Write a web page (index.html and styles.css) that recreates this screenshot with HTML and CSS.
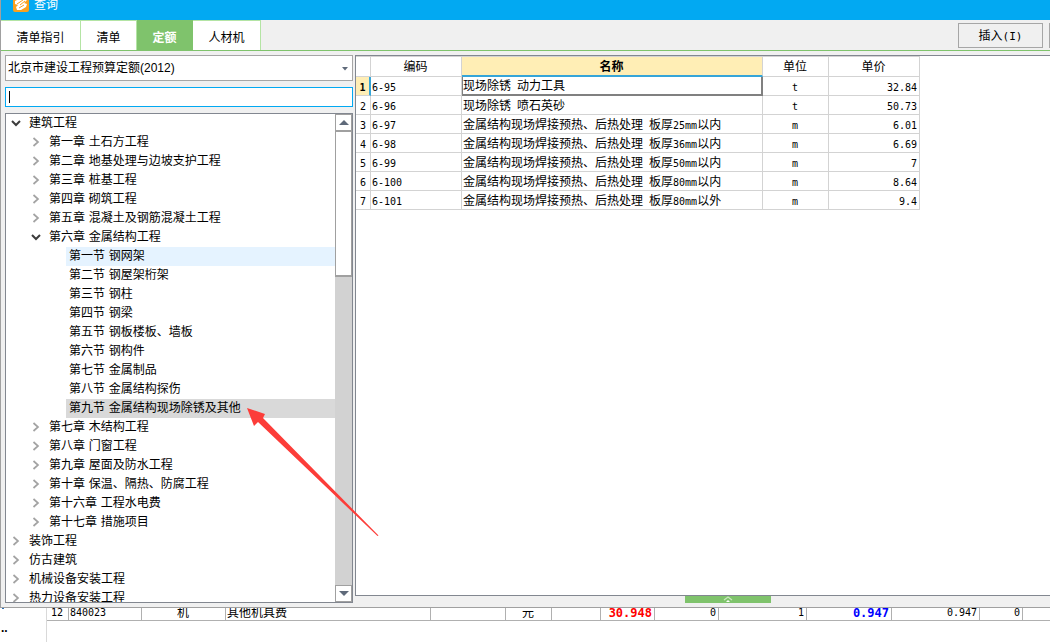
FILE: index.html
```html
<!DOCTYPE html>
<html lang="zh-CN">
<head>
<meta charset="utf-8">
<title>查询</title>
<link rel="stylesheet" href="styles.css">
</head>
<body>
<svg width="0" height="0" class="defs" aria-hidden="true">
  <symbol id="right" viewBox="0 0 10 10"><path d="M2.5 1 L7 5 L2.5 9" fill="none" stroke="#a3a3a3" stroke-width="1.7"/></symbol>
  <symbol id="down" viewBox="0 0 10 10"><path d="M1 3 L5 7 L9 3" fill="none" stroke="#3c3c3c" stroke-width="2"/></symbol>
</svg>
<section class="dialog" role="dialog" aria-labelledby="dialog-title">
  <header class="titlebar">
    <svg class="logo" viewBox="0 0 16 16" aria-hidden="true">
      <rect width="16" height="16" rx="2" fill="#f9a11f"/>
      <path d="M2 5 L8 2 L14 1 L14 4 L11 7 L14 8 L13 11 L8 14 L4 14 L3 11 L5 9 L2 8 Z" fill="#fff"/>
      <path d="M4 8 L10 4 M7 9 L12 5 M6 12 L11 9" fill="none" stroke="#f9a11f" stroke-width="1"/>
    </svg>
    <h1 id="dialog-title">查询</h1>
  </header>
  <div class="toolbar">
    <nav class="tabs" role="tablist">
      <button class="tab wide" role="tab">清单指引</button>
      <button class="tab" role="tab">清单</button>
      <button class="tab active" role="tab" aria-selected="true">定额</button>
      <button class="tab medium" role="tab">人材机</button>
    </nav>
    <div class="actions">
      <button class="action">插入<span class="mono key">(I)</span></button>
      <button class="action clipped" aria-label="更多"></button>
    </div>
  </div>
  <div class="content">
    <aside class="sidebar">
      <label class="library">
        <select aria-label="定额库"><option>北京市建设工程预算定额(2012)</option></select>
        <svg viewBox="0 0 6 4" aria-hidden="true"><path d="M0 0H6L3 3.5Z" fill="#5f6a7a"/></svg>
      </label>
      <div class="search"><input type="text" aria-label="搜索"><span class="caret"></span></div>
      <div class="tree">
        <ul class="nodes">
          <li class="l1"><button><svg><use href="#down"/></svg><span>建筑工程</span></button></li>
          <li class="l2"><button><svg><use href="#right"/></svg><span>第一章 土石方工程</span></button></li>
          <li class="l2"><button><svg><use href="#right"/></svg><span>第二章 地基处理与边坡支护工程</span></button></li>
          <li class="l2"><button><svg><use href="#right"/></svg><span>第三章 桩基工程</span></button></li>
          <li class="l2"><button><svg><use href="#right"/></svg><span>第四章 砌筑工程</span></button></li>
          <li class="l2"><button><svg><use href="#right"/></svg><span>第五章 混凝土及钢筋混凝土工程</span></button></li>
          <li class="l2"><button><svg><use href="#down"/></svg><span>第六章 金属结构工程</span></button></li>
          <li class="l3"><button class="hover"><span>第一节 钢网架</span></button></li>
          <li class="l3"><button><span>第二节 钢屋架桁架</span></button></li>
          <li class="l3"><button><span>第三节 钢柱</span></button></li>
          <li class="l3"><button><span>第四节 钢梁</span></button></li>
          <li class="l3"><button><span>第五节 钢板楼板、墙板</span></button></li>
          <li class="l3"><button><span>第六节 钢构件</span></button></li>
          <li class="l3"><button><span>第七节 金属制品</span></button></li>
          <li class="l3"><button><span>第八节 金属结构探伤</span></button></li>
          <li class="l3"><button class="selected"><span>第九节 金属结构现场除锈及其他</span></button></li>
          <li class="l2"><button><svg><use href="#right"/></svg><span>第七章 木结构工程</span></button></li>
          <li class="l2"><button><svg><use href="#right"/></svg><span>第八章 门窗工程</span></button></li>
          <li class="l2"><button><svg><use href="#right"/></svg><span>第九章 屋面及防水工程</span></button></li>
          <li class="l2"><button><svg><use href="#right"/></svg><span>第十章 保温、隔热、防腐工程</span></button></li>
          <li class="l2"><button><svg><use href="#right"/></svg><span>第十六章 工程水电费</span></button></li>
          <li class="l2"><button><svg><use href="#right"/></svg><span>第十七章 措施项目</span></button></li>
          <li class="l1"><button><svg><use href="#right"/></svg><span>装饰工程</span></button></li>
          <li class="l1"><button><svg><use href="#right"/></svg><span>仿古建筑</span></button></li>
          <li class="l1"><button><svg><use href="#right"/></svg><span>机械设备安装工程</span></button></li>
          <li class="l1"><button><svg><use href="#right"/></svg><span>热力设备安装工程</span></button></li>
        </ul>
        <div class="scrollbar">
          <button aria-label="向上滚动"><svg viewBox="0 0 10 5"><path d="M0 5H10L5 0Z" fill="#5f6a7a"/></svg></button>
          <div class="thumb"></div>
          <button class="end" aria-label="向下滚动"><svg viewBox="0 0 10 5"><path d="M0 0H10L5 5Z" fill="#5f6a7a"/></svg></button>
        </div>
      </div>
    </aside>
    <main class="main">
      <div class="results">
        <table class="grid">
          <colgroup><col class="c-no"><col class="c-code"><col class="c-name"><col class="c-unit"><col class="c-price"></colgroup>
          <thead><tr><th></th><th>编码</th><th class="current">名称</th><th>单位</th><th>单价</th></tr></thead>
          <tbody>
            <tr class="active"><th>1</th><td class="mono">6-95</td><td class="cell">现场除锈<span class="mono"> </span>动力工具</td><td class="mono">t</td><td class="mono">32.84</td></tr>
            <tr><th>2</th><td class="mono">6-96</td><td>现场除锈<span class="mono"> </span>喷石英砂</td><td class="mono">t</td><td class="mono">50.73</td></tr>
            <tr><th>3</th><td class="mono">6-97</td><td>金属结构现场焊接预热、后热处理<span class="mono"> </span>板厚<span class="mono">25mm</span>以内</td><td class="mono">m</td><td class="mono">6.01</td></tr>
            <tr><th>4</th><td class="mono">6-98</td><td>金属结构现场焊接预热、后热处理<span class="mono"> </span>板厚<span class="mono">36mm</span>以内</td><td class="mono">m</td><td class="mono">6.69</td></tr>
            <tr><th>5</th><td class="mono">6-99</td><td>金属结构现场焊接预热、后热处理<span class="mono"> </span>板厚<span class="mono">50mm</span>以内</td><td class="mono">m</td><td class="mono">7</td></tr>
            <tr><th>6</th><td class="mono">6-100</td><td>金属结构现场焊接预热、后热处理<span class="mono"> </span>板厚<span class="mono">80mm</span>以内</td><td class="mono">m</td><td class="mono">8.64</td></tr>
            <tr><th>7</th><td class="mono">6-101</td><td>金属结构现场焊接预热、后热处理<span class="mono"> </span>板厚<span class="mono">80mm</span>以外</td><td class="mono">m</td><td class="mono">9.4</td></tr>
          </tbody>
        </table>
      </div>
      <div class="footer">
        <button class="grip" aria-label="展开"><svg viewBox="0 0 10 6"><path d="M1 4 L5 1 L9 4" fill="none" stroke="#c9e8bd" stroke-width="1.3"/><path d="M3 6 L5 4 L7 6Z" fill="#fff"/></svg></button>
      </div>
    </main>
  </div>
</section>
<section class="backdrop">
  <div class="margin"><span class="mark"></span><span class="dots">..</span></div>
  <div class="sheet">
    <table class="costs">
      <colgroup><col class="k22"><col class="k73"><col class="k84"><col class="k205"><col class="k75"><col class="k46"><col class="k49"><col class="k54"><col class="k64"><col class="k88"><col class="k85"><col class="k88"><col class="k43"><col></colgroup>
      <tbody><tr><td class="mid mono">12</td><td class="mono">840023</td><td class="mid">机</td><td>其他机具费</td><td></td><td class="mid">元</td><td></td><td class="num red">30.948</td><td class="num mono">0</td><td class="num mono">1</td><td class="num blue">0.947</td><td class="num mono">0.947</td><td class="num mono">0</td><td></td></tr></tbody>
    </table>
  </div>
</section>
<svg class="pointer" viewBox="0 0 132 128" aria-hidden="true"><path d="M0 0 L18 6 L16 10 L131.5 127.5 L130.5 128 L11 14 L7 18Z" fill="#fc3d39"/></svg>
</body>
</html>
```
FILE: styles.css
```css
* { box-sizing: border-box; }

body {
  margin: 0;
  height: 100vh;
  display: flex;
  flex-direction: column;
  overflow: hidden;
  background: #fff;
  color: #000;
  font: 12px/18px "Liberation Sans", "Noto Sans CJK SC", sans-serif;
}

button, select, input {
  font: inherit;
  color: inherit;
  border: 0;
  padding: 0;
  margin: 0;
  background: none;
  border-radius: 0;
}

.defs { position: absolute; }

.mono {
  font-family: "DejaVu Sans Mono", monospace;
  font-size: 10px;
  white-space: pre;
}
.mono.key { font-size: 11px; }

.dialog {
  flex: 1;
  min-height: 0;
  display: flex;
  flex-direction: column;
  background: #f0f0f0;
  border-left: 1px solid #a0a0a0;
  border-bottom: 1px solid #a0a0a0;
}

.titlebar {
  flex: none;
  height: 20px;
  display: flex;
  align-items: flex-end;
  gap: 5px;
  padding: 0 12px 8px;
  overflow: hidden;
  background: #02a9f2;
  color: #fff;
}
.logo { width: 16px; height: 16px; flex: none; }
.titlebar h1 { margin: 0; font-size: 12px; line-height: 14px; font-weight: 400; }

.toolbar {
  flex: none;
  height: 31px;
  display: flex;
  justify-content: space-between;
  border-bottom: 1px solid #7fc36c;
  overflow: hidden;
}
.tabs { display: flex; }
.tab {
  width: 56px;
  padding-top: 4px;
  background: #fff;
  border-top: 1px solid #b4e4a4;
  border-right: 1px solid #b4e4a4;
}
.tab.wide { width: 80px; }
.tab.medium { width: 68px; }
.tab.active { background: #7fc36c; border-color: #7fc36c; color: #fff; font-weight: 700; }

.actions { display: flex; align-items: flex-start; gap: 6px; padding-top: 3px; }
.action { width: 85px; height: 25px; padding-top: 2px; border: 1px solid #a6a6a6; background: #f0f0f0; }
.action.clipped { margin-right: -84px; }

.content { flex: 1; min-height: 0; display: flex; gap: 2px; padding: 4px 0 0 4px; }

.sidebar {
  flex: none;
  width: 348px;
  display: flex;
  flex-direction: column;
  gap: 6px;
  padding-bottom: 4px;
}
.library { position: relative; display: flex; height: 26px; }
.library select {
  flex: 1;
  appearance: none;
  padding: 0 2px;
  background: #fff;
  border: 1px solid #a6a6a6;
}
.library svg { position: absolute; right: 5px; top: 12px; width: 6px; height: 4px; }
.search { position: relative; display: flex; height: 20px; }
.search input { flex: 1; background: #fff; border: 1px solid #02a9f2; outline: 0; padding: 0 4px; }
.caret { position: absolute; left: 4px; top: 4px; width: 1px; height: 12px; background: #000; }

.tree {
  flex: 1;
  min-height: 0;
  display: flex;
  background: #fff;
  border: 1px solid #828790;
  overflow: hidden;
}
.nodes { flex: 1; margin: 0; padding: 0; list-style: none; overflow: hidden; }
.nodes li { height: 19px; display: flex; }
.l1 { padding-left: 5px; }
.l2 { padding-left: 25px; }
.l3 { padding-left: 60px; }
.nodes button {
  flex: 1;
  display: flex;
  align-items: center;
  gap: 8px;
  padding-bottom: 2px;
  text-align: left;
  white-space: nowrap;
  font-family: "DejaVu Sans", "Noto Sans CJK SC", sans-serif;
}
.nodes svg { width: 10px; height: 10px; flex: none; }
.l3 button { padding-left: 3px; }
.hover { background: #e5f3ff; }
.selected { background: #d9d9d9; }

.scrollbar { flex: none; width: 17px; display: flex; flex-direction: column; background: #d2d2d2; }
.scrollbar button {
  flex: none;
  height: 17px;
  display: flex;
  align-items: center;
  justify-content: center;
  background: #fff;
  border: 1px solid #a0a0a0;
}
.scrollbar svg { width: 10px; height: 5px; }
.thumb { height: 146px; background: #fff; border: 1px solid #a0a0a0; border-bottom-width: 2px; }
.scrollbar .end { margin-top: auto; }

.main { flex: 1; min-width: 0; display: flex; flex-direction: column; }
.results {
  flex: 1;
  min-height: 0;
  background: #fff;
  border: 1px solid #828790;
  border-right: 0;
}
.footer { flex: none; height: 11px; padding-left: 330px; display: flex; }
.grip { width: 86px; height: 7px; background: #7fc36c; display: flex; justify-content: center; }
.grip svg { width: 10px; height: 6px; }

.grid { border-collapse: separate; border-spacing: 0; table-layout: fixed; width: 564px; border-top: 1px solid #d3d3d3; }
.c-no { width: 15px; }
.c-code, .c-price { width: 91px; }
.c-name { width: 301px; }
.c-unit { width: 66px; }
.grid th, .grid td {
  height: 19px;
  padding: 2px 2px 0 1px;
  line-height: 15px;
  border-right: 1px solid #d3d3d3;
  border-bottom: 1px solid #d3d3d3;
  font-weight: 400;
  white-space: nowrap;
}
.grid span { line-height: 10px; }
.grid thead th { height: 20px; }
.grid thead .current { background: #ffeeb5; font-weight: 700; border-bottom: 2px solid #35a5d8; }
.grid tbody th { padding: 2px 0 0; font: 10px/15px "DejaVu Sans Mono", monospace; }
.grid .active th { background: #ffeeb5; font-weight: 700; border-right: 2px solid #35a5d8; }
.grid .cell { padding-left: 0; border: 1px solid #808080; border-top: 0; border-right-width: 2px; border-bottom-width: 2px; }
.grid td:nth-child(4) { text-align: center; }
.grid td:nth-child(5) { text-align: right; }

.backdrop { flex: none; height: 34px; display: flex; overflow: hidden; }
.margin { flex: none; width: 47px; display: flex; flex-direction: column; border-right: 1px solid #d9d9d9; }
.mark { width: 2px; height: 1px; margin-left: 2px; background: #2b6fb5; }
.dots { padding-left: 1px; margin-top: 10px; font-weight: 700; line-height: 18px; }
.sheet { flex: 1; min-width: 0; }
.costs { width: 100%; table-layout: fixed; border-collapse: separate; border-spacing: 0; }
.costs td {
  height: 13px;
  padding: 0 2px 2px 1px;
  line-height: 10px;
  white-space: nowrap;
  border-right: 1px solid #b0b0b0;
  border-bottom: 1px solid #b0b0b0;
}
.costs td:last-child { border-right: 0; }
.costs .mid { text-align: center; }
.costs .num { text-align: right; }
.costs .red, .costs .blue { font: 700 12px/10px "DejaVu Sans Mono", monospace; }
.red { color: #f00; }
.blue { color: #00f; }
.k22 { width: 22px; }
.k73 { width: 73px; }
.k84 { width: 84px; }
.k205 { width: 205px; }
.k75 { width: 75px; }
.k46 { width: 46px; }
.k49 { width: 49px; }
.k54 { width: 54px; }
.k64 { width: 64px; }
.k88 { width: 88px; }
.k85 { width: 85px; }
.k43 { width: 43px; }

.pointer { position: absolute; left: 247px; top: 408px; width: 132px; height: 128px; pointer-events: none; }
```
